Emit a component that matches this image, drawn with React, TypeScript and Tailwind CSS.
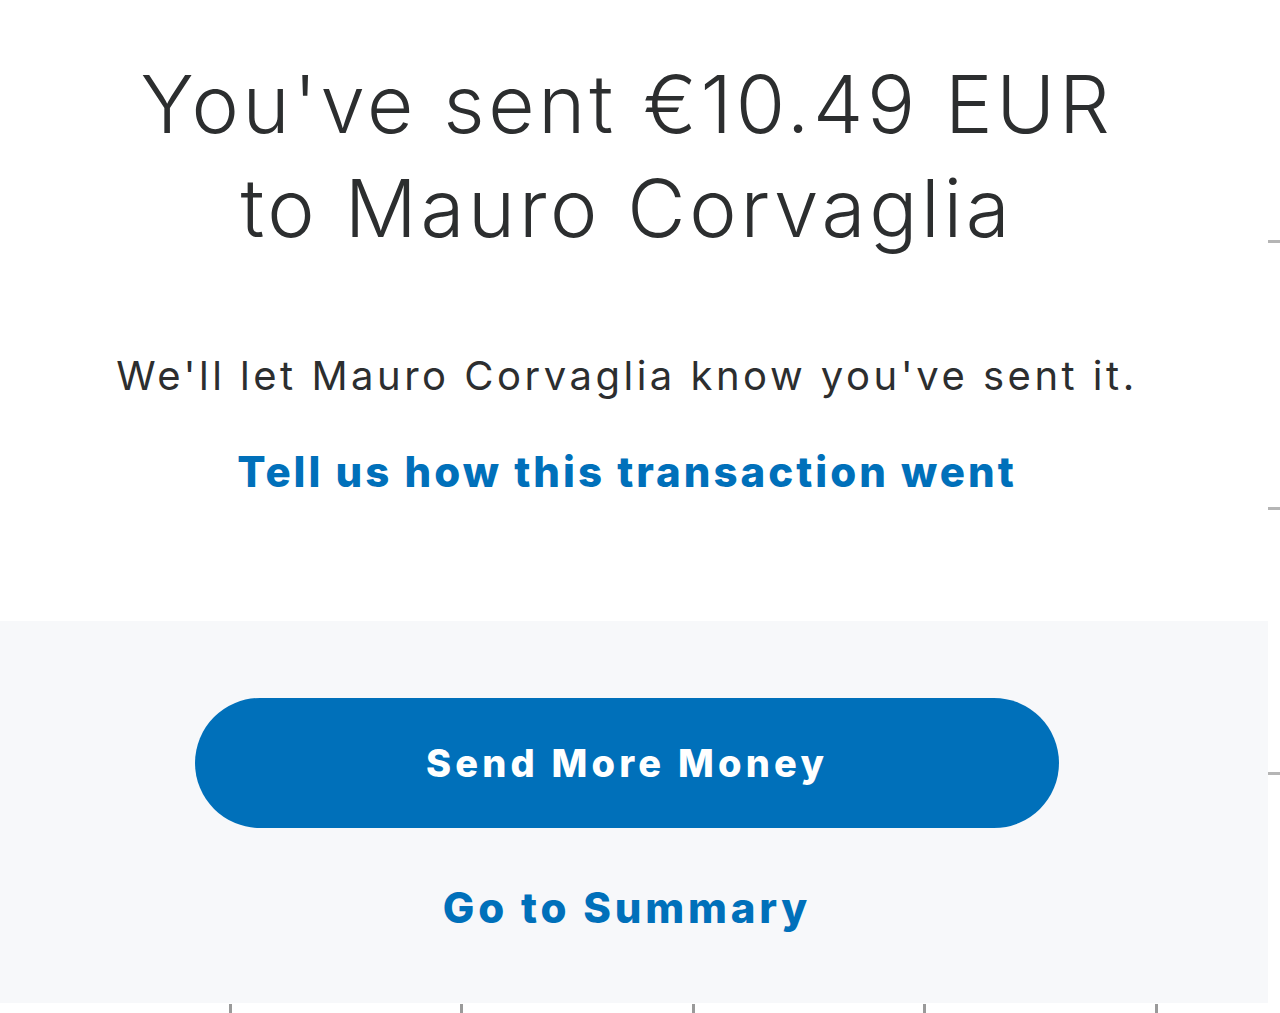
export default function App() {
    const ticksBottom = [229, 460, 692, 923, 1155]
    const ticksRight = [240, 507, 772]

    return (
        <div className="relative w-[1280px] h-[1013px] bg-white overflow-hidden" style={{ fontFamily: 'Inter, "Open Sans", sans-serif' }}>
            <div className="w-[1254px] h-[621px] flex flex-col items-center pt-[52px] text-[#2c2e2f]">
                <h1 className="text-[80px] leading-[104px] font-light text-center tracking-[3.7px]">
                    You've sent €10.49 EUR
                    <br />
                    to Mauro Corvaglia
                </h1>
                <p className="mt-[88px] text-[40px] leading-[56px] text-center tracking-[3.5px]">
                    We'll let Mauro Corvaglia know you've sent it.
                </p>
                <a className="mt-[40px] text-[42px] leading-[56px] font-extrabold tracking-[3px] text-[#0070ba]">
                    Tell us how this transaction went
                </a>
            </div>

            <div className="w-[1268px] h-[382px] bg-[#f7f8fa]">
                <div className="w-[1254px] flex flex-col items-center pt-[77px]">
                    <button className="w-[864px] h-[130px] rounded-full bg-[#0070ba] text-white text-[38px] font-extrabold tracking-[4.2px]">
                        Send More Money
                    </button>
                    <a className="mt-[52px] text-[42px] leading-[56px] font-extrabold tracking-[3.8px] text-[#0070ba]">
                        Go to Summary
                    </a>
                </div>
            </div>

            {ticksBottom.map((x) => (
                <div key={x} className="absolute bottom-0 w-[3px] h-[9px] bg-[#9a9a9a]" style={{ left: x }} />
            ))}
            {ticksRight.map((y) => (
                <div key={y} className="absolute right-0 w-[12px] h-[3px] bg-[#b5b5b5]" style={{ top: y }} />
            ))}
        </div>
    )
}
